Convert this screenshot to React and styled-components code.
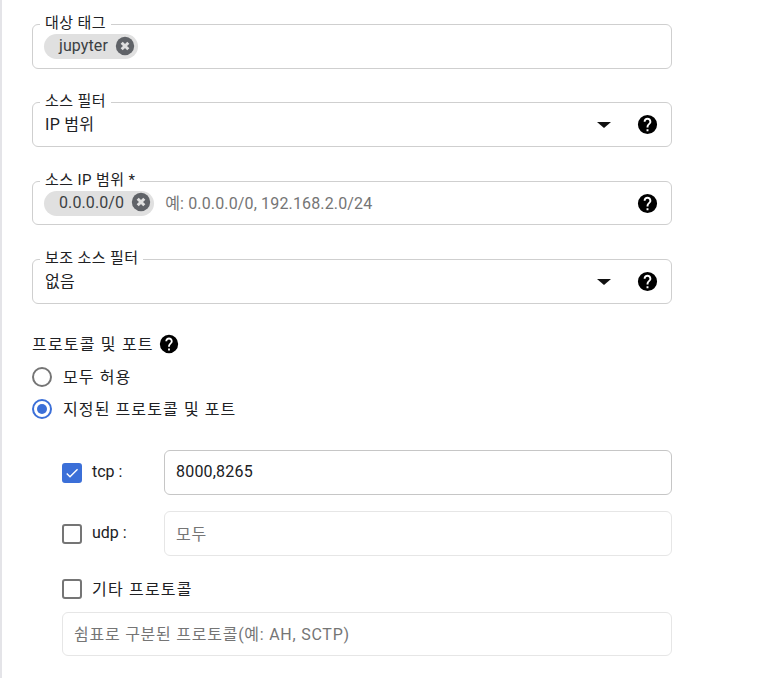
import { createGlobalStyle } from 'styled-components';
import styled from 'styled-components';

const GlobalStyle = createGlobalStyle`
	html, body {
		margin: 0;
		padding: 0;
		background: #fff;
	}
	body {
		font-family: Roboto, "Noto Sans CJK KR", sans-serif;
		font-size: 16px;
		color: #202124;
	}
`;

const Page = styled.div`
	box-sizing: border-box;
	width: 761px;
	height: 678px;
	overflow: hidden;
	border-left: 2px solid #e4e4e8;
	padding: 24px 0 0 30px;
`;

const Form = styled.div`
	width: 640px;
	display: flex;
	flex-direction: column;
`;

const Field = styled.div`
	position: relative;
	box-sizing: border-box;
	height: ${(p) => p.$height}px;
	margin-bottom: ${(p) => p.$gap}px;
	border: 1px solid #cfcfcf;
	border-radius: 6px;
	padding: 0 12px 0 11px;
	display: flex;
	align-items: center;
	gap: 11px;
`;

const Legend = styled.label`
	position: absolute;
	top: -11px;
	left: 7px;
	padding: 0 5px 0 5px;
	background: #fff;
	font-size: 15px;
	line-height: 18px;
	letter-spacing: 0.4px;
	color: #202124;
`;

const Chip = styled.span`
	box-sizing: border-box;
	display: inline-flex;
	align-items: center;
	gap: 6px;
	height: 25px;
	padding: 0 2px 2px 15px;
	border-radius: 13px;
	background: #e0e0e0;
	font-size: 16px;
	letter-spacing: 0.1px;
	color: #3c4043;
`;

const ChipClose = styled.svg`
	width: 22px;
	height: 22px;
	display: block;
`;

const Value = styled.span`
	flex: 1;
	padding-left: 1px;
	font-size: 16px;
	letter-spacing: 0.3px;
	margin-top: -3px;
	color: #202124;
`;

const Hint = styled.span`
	flex: 1;
	font-size: 16px;
	letter-spacing: 0.15px;
	margin-top: -2px;
	color: #757575;
`;

const Caret = styled.span`
	width: 0;
	height: 0;
	border-left: 7px solid transparent;
	border-right: 7px solid transparent;
	border-top: 6px solid #111;
	margin-right: 14px;
`;

const Help = styled.svg`
	width: ${(p) => p.$size || 23}px;
	height: ${(p) => p.$size || 23}px;
	display: block;
	flex: none;
`;

const SectionTitle = styled.div`
	display: flex;
	align-items: center;
	gap: 4px;
	height: 20px;
	margin-top: 1px;
	font-size: 16px;
	letter-spacing: 1.2px;
`;

const RadioRow = styled.div`
	display: flex;
	align-items: center;
	gap: 11px;
	height: 22px;
	margin-top: ${(p) => p.$top}px;
	font-size: 16px;
	letter-spacing: 1.1px;
`;

const RadioText = styled.span`
	margin-top: -2px;
`;

const Radio = styled.span`
	box-sizing: border-box;
	width: 20px;
	height: 20px;
	border-radius: 50%;
	border: 2px solid ${(p) => (p.$on ? '#3b6fd8' : '#757575')};
	display: flex;
	align-items: center;
	justify-content: center;
	&::after {
		content: '';
		width: 10px;
		height: 10px;
		border-radius: 50%;
		background: ${(p) => (p.$on ? '#3b6fd8' : 'transparent')};
	}
`;

const Protocols = styled.div`
	margin-top: 30px;
	padding-left: 30px;
	display: flex;
	flex-direction: column;
`;

const PortRow = styled.div`
	display: flex;
	align-items: center;
	margin-bottom: ${(p) => p.$gap}px;
`;

const Check = styled.span`
	box-sizing: border-box;
	width: 20px;
	height: 20px;
	flex: none;
	border-radius: 3px;
	border: 2px solid ${(p) => (p.$on ? '#3b6fd8' : '#757575')};
	background: ${(p) => (p.$on ? '#3b6fd8' : '#fff')};
	display: flex;
	align-items: center;
	justify-content: center;
`;

const CheckLabel = styled.span`
	width: 72px;
	margin: -2px 0 0 10px;
	font-size: 16px;
	color: #202124;
	white-space: nowrap;
	letter-spacing: ${(p) => (p.$wide ? '1.2px' : '0')};
`;

const PortInput = styled.div`
	box-sizing: border-box;
	flex: 1;
	height: ${(p) => p.$height}px;
	border: 1px solid ${(p) => (p.$off ? '#e6e6e6' : '#c6c6c6')};
	border-radius: 6px;
	padding: 0 11px 2px;
	display: flex;
	align-items: center;
	font-size: 16px;
	letter-spacing: ${(p) => (p.$off ? '0.75px' : '0.2px')};
	color: ${(p) => (p.$off ? '#757575' : '#202124')};
`;

const helpPath =
	'M12 2a10 10 0 1 0 0 20 10 10 0 0 0 0-20zm1 17h-2v-2h2v2zm2.07-7.75-.9.92C13.45 12.9 13 13.5 13 15h-2v-.5c0-1.1.45-2.1 1.17-2.83l1.24-1.26c.37-.36.59-.86.59-1.41 0-1.1-.9-2-2-2s-2 .9-2 2H8c0-2.21 1.79-4 4-4s4 1.79 4 4c0 .88-.36 1.68-.93 2.25z';

const CloseIcon = () => (
	<ChipClose viewBox="0 0 24 24">
		<circle cx="12" cy="12" r="10" fill="#606368" />
		<path d="M8.4 8.4l7.2 7.2M15.6 8.4l-7.2 7.2" stroke="#e0e0e0" strokeWidth="3.2" fill="none" />
	</ChipClose>
);

const HelpIcon = ({ size }) => (
	<Help $size={size} viewBox="0 0 24 24">
		<path d={helpPath} fill="#000" />
	</Help>
);

const CheckMark = () => (
	<svg width="18" height="18" viewBox="0 0 24 24">
		<path d="M9 16.2 4.8 12l-1.4 1.4L9 19 21 7l-1.4-1.4z" fill="#fff" />
	</svg>
);

export default function App() {
	return (
		<>
			<GlobalStyle />
			<Page>
				<Form>
					<Field $height={45} $gap={33}>
						<Legend>대상 태그</Legend>
						<Chip>
							jupyter
							<CloseIcon />
						</Chip>
					</Field>

					<Field $height={45} $gap={34}>
						<Legend>소스 필터</Legend>
						<Value>IP 범위</Value>
						<Caret />
						<HelpIcon />
					</Field>

					<Field $height={44} $gap={34}>
						<Legend>소스 IP 범위 *</Legend>
						<Chip>
							0.0.0.0/0
							<CloseIcon />
						</Chip>
						<Hint>예: 0.0.0.0/0, 192.168.2.0/24</Hint>
						<HelpIcon />
					</Field>

					<Field $height={45} $gap={29}>
						<Legend>보조 소스 필터</Legend>
						<Value>없음</Value>
						<Caret />
						<HelpIcon />
					</Field>

					<SectionTitle>
						<RadioText>프로토콜 및 포트</RadioText>
						<HelpIcon size={22} />
					</SectionTitle>
					<RadioRow $top={12}>
						<Radio />
						<RadioText>모두 허용</RadioText>
					</RadioRow>
					<RadioRow $top={10}>
						<Radio $on />
						<RadioText>지정된 프로토콜 및 포트</RadioText>
					</RadioRow>

					<Protocols>
						<PortRow $gap={16}>
							<Check $on>
								<CheckMark />
							</Check>
							<CheckLabel>tcp :</CheckLabel>
							<PortInput $height={45}>8000,8265</PortInput>
						</PortRow>
						<PortRow $gap={22}>
							<Check />
							<CheckLabel>udp :</CheckLabel>
							<PortInput $height={45} $off>
								모두
							</PortInput>
						</PortRow>
						<PortRow $gap={12}>
							<Check />
							<CheckLabel $wide>기타 프로토콜</CheckLabel>
						</PortRow>
						<PortRow $gap={0}>
							<PortInput $height={44} $off>
								쉼표로 구분된 프로토콜(예: AH, SCTP)
							</PortInput>
						</PortRow>
					</Protocols>
				</Form>
			</Page>
		</>
	);
}
